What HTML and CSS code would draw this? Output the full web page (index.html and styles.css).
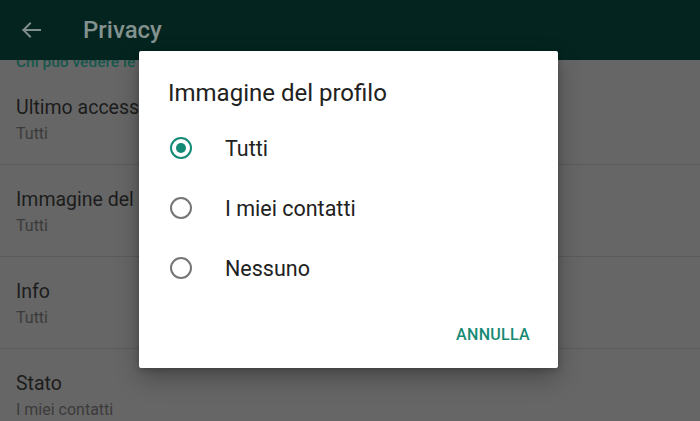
FILE: index.html
```html
<!DOCTYPE html>
<html lang="it">
<head>
<meta charset="utf-8">
<title>Privacy</title>
<link rel="stylesheet" href="styles.css">
</head>
<body>
<div class="screen">
  <header class="appbar">
    <svg class="back" width="20" height="16" viewBox="0 0 20 16" aria-hidden="true">
      <path d="M19 8H2.5M9 1.5L2.5 8L9 14.5" fill="none" stroke="currentColor" stroke-width="2" stroke-linecap="square" stroke-linejoin="miter"/>
    </svg>
    <h1 class="appbar-title">Privacy</h1>
  </header>
  <main class="list">
    <div class="section-title">Chi può vedere le mie info</div>
    <div class="item">
      <div class="item-title">Ultimo accesso</div>
      <div class="item-sub">Tutti</div>
    </div>
    <div class="item">
      <div class="item-title">Immagine del profilo</div>
      <div class="item-sub">Tutti</div>
    </div>
    <div class="item">
      <div class="item-title">Info</div>
      <div class="item-sub">Tutti</div>
    </div>
    <div class="item">
      <div class="item-title">Stato</div>
      <div class="item-sub">I miei contatti</div>
    </div>
  </main>

  <div class="dialog" role="dialog">
    <div class="dialog-title">Immagine del profilo</div>
    <div class="options">
      <div class="option"><span class="radio checked"></span><span class="option-label">Tutti</span></div>
      <div class="option"><span class="radio"></span><span class="option-label">I miei contatti</span></div>
      <div class="option"><span class="radio"></span><span class="option-label">Nessuno</span></div>
    </div>
    <div class="actions"><span class="btn">ANNULLA</span></div>
  </div>
</div>
</body>
</html>
```

FILE: styles.css
```css
* { box-sizing: border-box; }
html, body { margin: 0; padding: 0; }
body {
  width: 700px;
  height: 421px;
  overflow: hidden;
  font-family: Roboto, "Noto Sans", "Liberation Sans", sans-serif;
  background: #666666;
}
.screen {
  position: relative;
  width: 700px;
  height: 421px;
  overflow: hidden;
  display: flex;
  flex-direction: column;
}
.appbar {
  height: 60px;
  flex: none;
  background: #03241f;
  display: flex;
  align-items: center;
  padding-left: 21px;
  position: relative;
  z-index: 1;
  color: #7f8e8a;
}
.back { display: block; }
.appbar-title {
  margin: 0 0 0 42px;
  font-size: 24px;
  font-weight: 500;
  color: #83928e;
  line-height: 28px;
}
.list {
  flex: 1;
  background: #666666;
}
.section-title {
  margin-top: -8px;
  height: 21px;
  line-height: 20px;
  padding-left: 16px;
  font-size: 15.5px;
  font-weight: 500;
  color: #17574d;
}
.item {
  padding: 22px 16px 16px;
  border-bottom: 1px solid #5b5b5b;
}
.item-title {
  font-size: 19.5px;
  line-height: 25px;
  color: #1c1c1c;
}
.item-sub {
  font-size: 16px;
  line-height: 28px;
  color: #3b3b3b;
}
.dialog {
  position: absolute;
  z-index: 2;
  left: 139px;
  top: 51px;
  width: 419px;
  height: 317px;
  background: #ffffff;
  border-radius: 2px;
  box-shadow: 0 10px 24px rgba(0,0,0,0.28), 0 2px 6px rgba(0,0,0,0.2);
  padding: 28px 28px 16px 0;
  display: flex;
  flex-direction: column;
}
.dialog-title {
  padding-left: 29px;
  font-size: 24px;
  line-height: 28px;
  color: #212121;
  font-weight: 400;
}
.options {
  margin-top: 11px;
  display: flex;
  flex-direction: column;
}
.option {
  height: 60px;
  display: flex;
  align-items: center;
  padding-left: 31px;
}
.radio {
  width: 22px;
  height: 22px;
  border-radius: 50%;
  border: 2.5px solid #767676;
  display: flex;
  align-items: center;
  justify-content: center;
  flex: none;
}
.radio.checked { border-color: #138a76; }
.radio.checked::after {
  content: "";
  width: 10px;
  height: 10px;
  border-radius: 50%;
  background: #138a76;
}
.option-label {
  margin-left: 33px;
  font-size: 21.5px;
  color: #212121;
}
.actions {
  margin-top: 18px;
  display: flex;
  justify-content: flex-end;
  height: 36px;
  align-items: center;
}
.btn {
  font-size: 16px;
  font-weight: 500;
  letter-spacing: 0.3px;
  color: #178a74;
}
```
